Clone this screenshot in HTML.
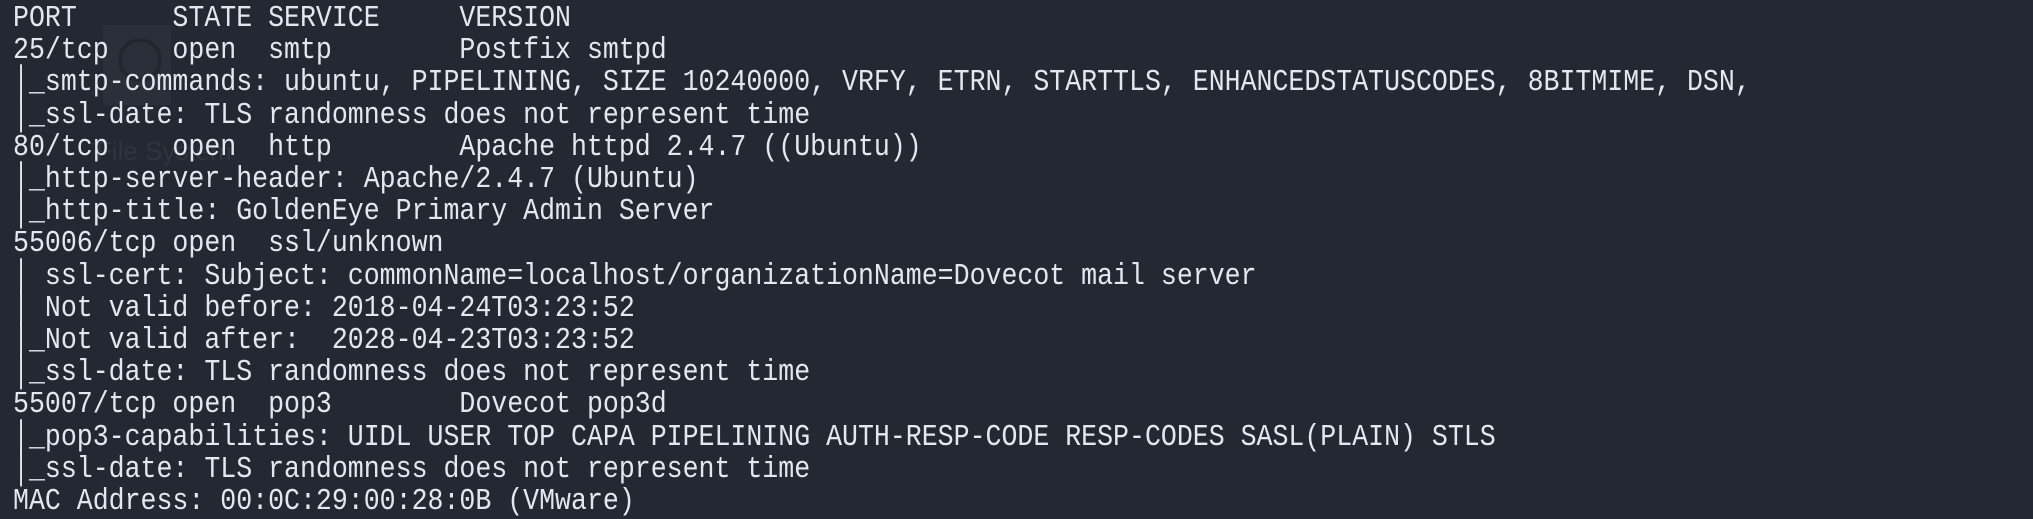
<!DOCTYPE html>
<html><head><meta charset="utf-8"><style>
html,body{margin:0;padding:0;width:2033px;height:495px;overflow:hidden;background:#232833;}
pre{position:absolute;left:13px;top:3px;margin:0;font-family:"Liberation Mono","DejaVu Sans Mono",monospace;font-size:31px;letter-spacing:0;line-height:32.2px;color:#e4e8ee;transform:scaleX(0.857);transform-origin:0 0;}
.g{position:absolute;}
</style></head><body>
<div class="g" style="left:103px;top:25px;width:68px;height:80px;background:rgba(255,255,255,0.035);border-radius:3px;"></div>
<div class="g" style="left:118px;top:38px;width:36px;height:36px;border:4px solid rgba(0,0,0,0.18);border-radius:50%;"></div>
<div class="g" style="left:96px;top:136px;font:26px 'Liberation Sans',sans-serif;color:rgba(255,255,255,0.06);">File System</div>
<pre>PORT      STATE SERVICE     VERSION
25/tcp    open  smtp        Postfix smtpd
│_smtp-commands: ubuntu, PIPELINING, SIZE 10240000, VRFY, ETRN, STARTTLS, ENHANCEDSTATUSCODES, 8BITMIME, DSN,
│_ssl-date: TLS randomness does not represent time
80/tcp    open  http        Apache httpd 2.4.7 ((Ubuntu))
│_http-server-header: Apache/2.4.7 (Ubuntu)
│_http-title: GoldenEye Primary Admin Server
55006/tcp open  ssl/unknown
│ ssl-cert: Subject: commonName=localhost/organizationName=Dovecot mail server
│ Not valid before: 2018-04-24T03:23:52
│_Not valid after:  2028-04-23T03:23:52
│_ssl-date: TLS randomness does not represent time
55007/tcp open  pop3        Dovecot pop3d
│_pop3-capabilities: UIDL USER TOP CAPA PIPELINING AUTH-RESP-CODE RESP-CODES SASL(PLAIN) STLS
│_ssl-date: TLS randomness does not represent time
MAC Address: 00:0C:29:00:28:0B (VMware)</pre>
</body></html>
